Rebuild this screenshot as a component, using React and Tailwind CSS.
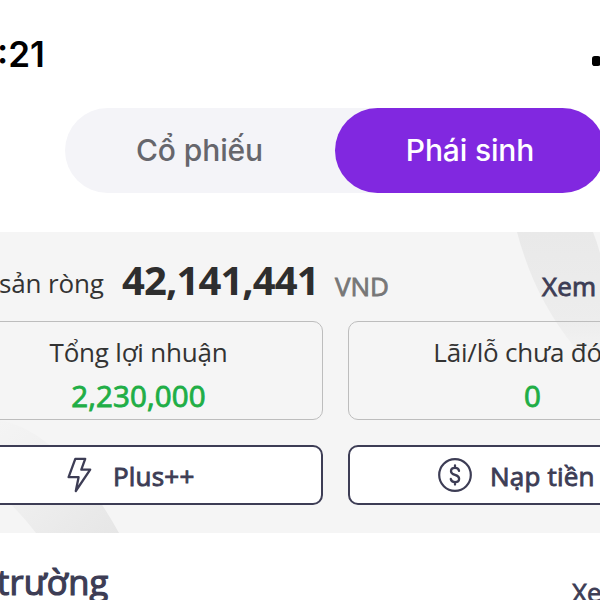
function StatusBar() {
  return (
    <header className="flex h-[108px] items-start justify-between font-['Inter',sans-serif]">
      <span className="-ml-[3px] mt-[37px] text-[35px] leading-[34px] font-semibold text-black">:21</span>
      <svg className="mt-[56px] h-[10px] w-[8px]" viewBox="0 0 8 10">
        <rect x="0" y="0" width="8.6" height="10" rx="2.8" fill="#000" />
      </svg>
    </header>
  );
}

function Tabs() {
  return (
    <nav className="ml-[65px] flex h-[85px] w-[540px] rounded-full bg-[#f4f4f8] font-['Inter',sans-serif] text-[30px] font-medium">
      <button className="w-[270px] rounded-full pr-[1px] tracking-[-0.1px] text-[#66666c]">Cổ phiếu</button>
      <button className="w-[270px] rounded-full bg-[#8128e0] tracking-[-0.15px] text-white">Phái sinh</button>
    </nav>
  );
}

function Stat({ label, value }) {
  return (
    <div className="flex h-[99px] w-[369px] flex-col items-center rounded-[10px] border-[1.5px] border-[#bdbdbd] pt-[12px]">
      <span className="text-[26px] leading-[36px] tracking-[-0.2px] text-[#333]">{label}</span>
      <span className="mt-[6px] text-[29.5px] leading-[40px] tracking-[0.15px] text-[#1fae46] [-webkit-text-stroke:0.9px_#1fae46]">{value}</span>
    </div>
  );
}

function Action({ icon, label, className }) {
  return (
    <button className={`flex h-[60px] w-[369px] items-center rounded-[10px] border-2 border-[#3d3d55] bg-white text-[26px] text-[#3d3d55] ${className}`}>
      {icon}
      <span className="mt-[2px] leading-[36px] tracking-[0.2px] [-webkit-text-stroke:0.9px_#3d3d55]">{label}</span>
    </button>
  );
}

function Bolt() {
  return (
    <svg className="mr-[21px] h-[36px] w-[26px]" viewBox="0 0 26 36" fill="none" stroke="#3d3d55" strokeWidth="2.3" strokeLinejoin="round">
      <path d="M9.3 1.8H19.2L15.3 12.6H24.2L9.8 34L12.6 20.2H2.6Z" />
    </svg>
  );
}

function Coin() {
  return (
    <svg className="mr-[18px] h-[34px] w-[34px]" viewBox="0 0 34 34" fill="none" stroke="#3d3d55" strokeWidth="2.2" strokeLinecap="round">
      <circle cx="17" cy="17" r="15.8" />
      <path d="M21 12.9C20.8 11.1 19.4 9.9 17 9.9C14.7 9.9 13 11 13 13.2C13 15.5 14.8 16.2 17 16.9C19.3 17.6 21.1 18.4 21.1 20.7C21.1 22.9 19.3 24.1 17 24.1C14.6 24.1 13.1 22.9 12.8 21M17 7.4V9.8M17 24.2V26.6" strokeWidth="2.3" />
    </svg>
  );
}

function Backdrop() {
  return (
    <svg className="absolute inset-0 h-[301px] w-[600px]" viewBox="0 0 600 301">
      <defs>
        <linearGradient id="top" x1="0" y1="0" x2="0" y2="1">
          <stop offset="0" stopColor="#e9e9e9" />
          <stop offset="0.75" stopColor="#ededed" />
          <stop offset="1" stopColor="#f3f3f3" />
        </linearGradient>
        <linearGradient id="bottom" x1="1" y1="1" x2="0" y2="0">
          <stop offset="0" stopColor="#e6e6e6" />
          <stop offset="0.7" stopColor="#f1f1f1" />
          <stop offset="1" stopColor="#f4f4f4" />
        </linearGradient>
      </defs>
      <path d="M517 0C529 45 547 81 575 116L580 122H600V21Q597 10 593 0Z" fill="url(#top)" />
      <path d="M0 188Q25 193 47 211Q86 241 119 301H36Q20 280 0 262Z" fill="url(#bottom)" />
    </svg>
  );
}

export default function App() {
  return (
    <main className="h-[600px] w-[600px] overflow-hidden bg-white font-['Open_Sans','Noto_Sans',sans-serif] whitespace-nowrap">
      <StatusBar />
      <Tabs />
      <section className="relative mt-[39px] h-[301px] overflow-hidden bg-[#f5f5f5]">
        <Backdrop />
        <div className="relative flex h-[89px] items-start pt-[20px]">
          <span className="-ml-px mt-[13px] w-[123px] text-[26px] leading-[36px] tracking-[-0.15px] text-[#333]">sản ròng</span>
          <span className="w-[213px] text-[40px] leading-[56px] font-bold tracking-[-0.9px] text-[#2e2e2e]">42,141,441</span>
          <span className="mt-[16px] w-[207px] text-[26px] leading-[36px] text-[#777] [-webkit-text-stroke:0.8px_#777]">VND</span>
          <span className="mt-[16px] text-[26px] leading-[36px] text-[#3d3d55] tracking-[0.2px] [-webkit-text-stroke:0.9px_#3d3d55]">Xem</span>
        </div>
        <div className="relative -ml-[46px] flex w-[763px] gap-[25px]">
          <Stat label="Tổng lợi nhuận" value="2,230,000" />
          <Stat label="Lãi/lỗ chưa đóng" value="0" />
        </div>
        <div className="relative mt-[25px] -ml-[46px] flex w-[763px] gap-[25px]">
          <Action icon={<Bolt />} label="Plus++" className="pl-[110px]" />
          <Action icon={<Coin />} label="Nạp tiền" className="pl-[88px]" />
        </div>
      </section>
      <div className="flex w-[640px] items-start pt-[26px] text-[#3d3d55]">
        <h2 className="-ml-[3px] w-[575px] shrink-0 text-[34.5px] leading-[46px] tracking-[0.2px] [-webkit-text-stroke:1.2px_#3d3d55]">trường</h2>
        <span className="mt-[15px] text-[26px] leading-[36px] [-webkit-text-stroke:0.8px_#3d3d55]">Xem</span>
      </div>
    </main>
  );
}
